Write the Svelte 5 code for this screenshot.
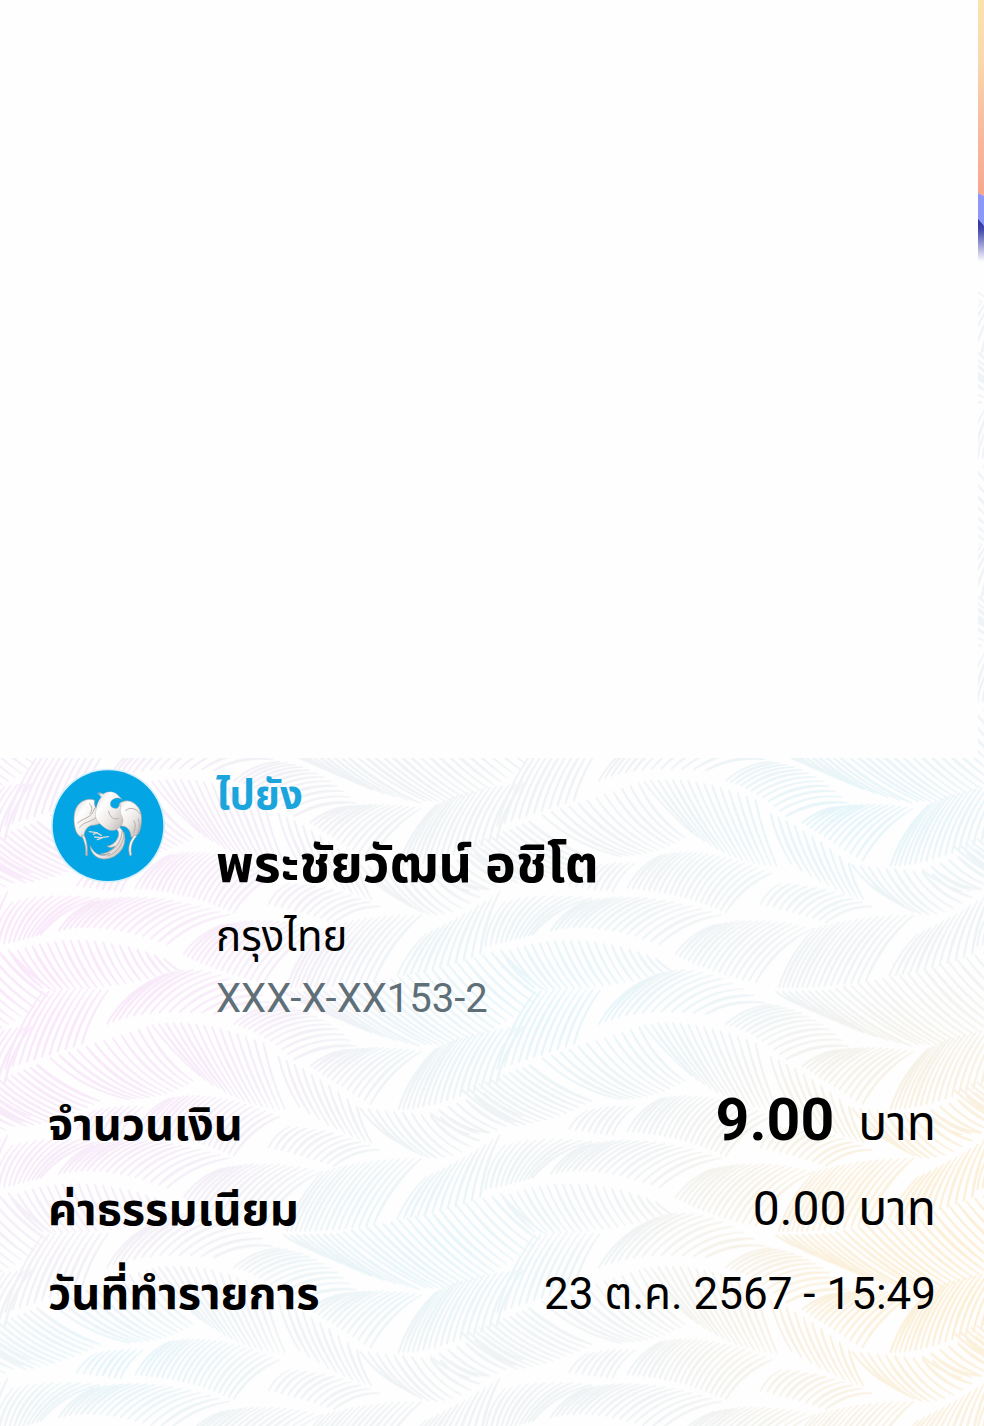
<script>
  // Feather bundles of the repeating watermark tile (1476 x 730 units).
  // root: quadratic along which hairs start, tip: quadratic along which they end,
  // n: number of hairs, bend: sideways bow of each hair.
  const feathers = [
    { root: [15, 935, 120, 900, 245, 860], tip: [130, 700, 220, 690, 325, 695], n: 11, bend: 0.07 },
    { root: [320, 800, 420, 750, 640, 768], tip: [480, 655, 620, 590, 820, 735], n: 13, bend: 0.12 },
    { root: [150, 170, 300, 120, 440, 75], tip: [390, 295, 500, 290, 580, 240], n: 12, bend: -0.1 },
    { root: [455, 70, 600, 45, 790, 125], tip: [600, 225, 740, 325, 855, 325], n: 15, bend: -0.04 },
    { root: [835, 165, 940, 210, 1070, 315], tip: [900, 320, 1040, 410, 1115, 425], n: 10, bend: -0.06 },
    { root: [1080, 320, 1200, 330, 1350, 350], tip: [1230, 440, 1320, 520, 1470, 395], n: 11, bend: -0.1 },
    { root: [1290, 335, 1370, 305, 1450, 275], tip: [1410, 400, 1500, 400, 1570, 345], n: 7, bend: -0.08 },
    { root: [700, 800, 780, 815, 880, 905], tip: [840, 740, 970, 760, 1070, 865], n: 12, bend: 0.12 },
    { root: [930, 195, 1000, 240, 1110, 310], tip: [1040, 145, 1150, 130, 1265, 150], n: 13, bend: 0.1 },
    { root: [1195, 325, 1300, 325, 1490, 245], tip: [1310, 140, 1400, 90, 1570, 75], n: 17, bend: 0.09 },
    { root: [1030, 690, 1250, 650, 1500, 575], tip: [1280, 860, 1450, 870, 1640, 700], n: 20, bend: -0.06 },
    { root: [850, 700, 930, 700, 1010, 695], tip: [970, 755, 1120, 840, 1260, 865], n: 9, bend: -0.07 },
    { root: [860, 690, 950, 695, 1120, 672], tip: [970, 510, 1100, 470, 1265, 470], n: 16, bend: 0.09 },
    { root: [1190, 655, 1300, 645, 1440, 590], tip: [1280, 525, 1380, 480, 1500, 400], n: 12, bend: 0.07 },
    { root: [-20, 565, 60, 550, 120, 530], tip: [40, 430, 150, 400, 300, 420], n: 11, bend: 0.12 },
    { root: [175, 520, 300, 485, 500, 560], tip: [280, 430, 450, 390, 690, 470], n: 17, bend: 0.11 },
    { root: [550, 590, 640, 640, 790, 675], tip: [670, 500, 800, 470, 965, 510], n: 16, bend: 0.12 },
    { root: [10, 595, 220, 495, 490, 600], tip: [110, 690, 300, 710, 540, 640], n: 21, bend: -0.06 },
    { root: [405, 392, 560, 400, 700, 465], tip: [510, 290, 640, 260, 840, 345], n: 20, bend: 0.12 },
    { root: [230, 385, 300, 395, 360, 402], tip: [290, 325, 360, 310, 430, 315], n: 8, bend: 0.1 },
    { root: [805, 440, 900, 460, 1000, 495], tip: [870, 375, 1000, 380, 1140, 445], n: 11, bend: 0.13 },
    { root: [-90, 265, 0, 235, 110, 190], tip: [80, 375, 200, 355, 300, 300], n: 12, bend: -0.07 }
  ];

  const at = (c, t) => {
    const u = 1 - t;
    return [
      u * u * c[0] + 2 * u * t * c[2] + t * t * c[4],
      u * u * c[1] + 2 * u * t * c[3] + t * t * c[5]
    ];
  };

  function hair(f, i) {
    const t = i / (f.n - 1);
    const [x1, y1] = at(f.root, t);
    const [x2, y2] = at(f.tip, t);
    const dx = x2 - x1;
    const dy = y2 - y1;
    const len = Math.hypot(dx, dy);
    const nx = dy / len;
    const ny = -dx / len;
    const thick = 4 + ((i * 5) % 7) / 2;
    const bow = f.bend * len * 1.4;
    const p = (x, y, k) => `${Math.round(x + nx * k)} ${Math.round(y + ny * k)}`;
    const mx = (x1 + x2) / 2;
    const my = (y1 + y2) / 2;
    return `M${p(x1, y1, 3)}Q${p(mx, my, bow + thick)} ${p(x2, y2, 2)}L${p(x2, y2, -2)}Q${p(mx, my, bow - thick)} ${p(x1, y1, -3)}Z`;
  }

  const tilePath = feathers
    .map((f) => Array.from({ length: f.n }, (_, i) => hair(f, i)).join(''))
    .join('');

  const shifts = [[0, 0], [0, -730], [0, 730], [-1476, 0], [-1476, -730], [1476, 0]];

  const payee = {
    label: 'ไปยัง',
    name: 'พระชัยวัฒน์ อชิโต',
    bank: 'กรุงไทย',
    account: 'XXX-X-XX153-2'
  };
</script>

<div class="slip">
  <svg class="watermark" aria-hidden="true">
    <defs>
      <pattern id="tile" width="1476" height="730" patternUnits="userSpaceOnUse" patternTransform="translate(0 28) scale(0.33333)">
        {#each shifts as [x, y]}
          <path d={tilePath} transform="translate({x} {y})" fill="#fff" />
        {/each}
      </pattern>
      <mask id="feathers">
        <rect width="100%" height="100%" fill="url(#tile)" />
      </mask>
      <radialGradient id="pink"><stop offset="0" stop-color="#f9e2fa" /><stop offset="0.5" stop-color="#f8e6fa" stop-opacity="0.8" /><stop offset="1" stop-color="#f6e6f8" stop-opacity="0" /></radialGradient>
      <radialGradient id="cyan"><stop offset="0" stop-color="#dff4fa" /><stop offset="1" stop-color="#e4f5fa" stop-opacity="0" /></radialGradient>
      <radialGradient id="gold"><stop offset="0" stop-color="#fdebc9" /><stop offset="0.5" stop-color="#fceed3" stop-opacity="0.85" /><stop offset="1" stop-color="#f9f0de" stop-opacity="0" /></radialGradient>
    </defs>
    <g mask="url(#feathers)" opacity="0.8">
      <rect width="100%" height="100%" fill="#edf1f3" />
      <ellipse cx="5%" cy="68%" rx="360" ry="370" fill="url(#pink)" />
      <ellipse cx="87%" cy="57%" rx="240" ry="110" fill="url(#cyan)" />
      <ellipse cx="55%" cy="70%" rx="260" ry="120" fill="url(#cyan)" />
      <ellipse cx="44%" cy="87%" rx="200" ry="120" fill="url(#cyan)" />
      <ellipse cx="12%" cy="95%" rx="180" ry="80" fill="url(#cyan)" />
      <ellipse cx="102%" cy="88%" rx="390" ry="310" fill="url(#gold)" />
    </g>
  </svg>

  <header class="top">
    <div class="blank"></div>
    <svg class="banner" viewBox="0 0 6 292" preserveAspectRatio="none" aria-hidden="true">
      <defs>
        <linearGradient id="dawn" x2="0" y2="1"><stop offset="0" stop-color="#fae3ad" /><stop offset="0.3" stop-color="#f8d9ae" /><stop offset="0.6" stop-color="#f8bfa2" /><stop offset="1" stop-color="#f9a58e" /></linearGradient>
        <linearGradient id="night" x2="0" y2="1"><stop offset="0" stop-color="#2b2f9c" /><stop offset="0.25" stop-color="#4448ae" /><stop offset="1" stop-color="#fff" /></linearGradient>
      </defs>
      <rect width="6" height="292" fill="#fefefe" />
      <path d="M0 0H6V196L0 193Z" fill="url(#dawn)" />
      <path d="M0 193L6 196V227L0 221Z" fill="#8d97f7" />
      <path d="M0 219L6 226V262H0Z" fill="url(#night)" />
    </svg>
  </header>

  <main>
    <section class="payee">
      <svg class="logo" viewBox="30 30 348 348" role="img" aria-label="กรุงไทย">
        <defs>
          <linearGradient id="silver" x2="1" y2="1"><stop offset="0" stop-color="#cfcdcb" /><stop offset="0.3" stop-color="#fff" /><stop offset="0.6" stop-color="#eeeae8" /><stop offset="1" stop-color="#bab5b2" /></linearGradient>
        </defs>
        <circle cx="204" cy="203" r="171" fill="#d5f0fb" />
        <circle cx="204" cy="203" r="166" fill="#03a5e5" />
        <g fill="url(#silver)" stroke="#a9a19d" stroke-width="2" stroke-linejoin="round">
          <path d="M164 127C143 118 119 129 108 151C99 171 101 199 108 220C115 235 124 239 132 237C132 220 139 208 155 202C167 202 178 200 186 190L180 160C166 155 162 142 164 127Z" />
          <path d="M238 137C259 119 286 132 298 153C308 173 305 201 299 219C292 235 282 239 273 236C272 216 261 205 245 204C228 200 215 185 218 165C230 158 240 150 238 137Z" />
          <path d="M124 231C134 249 139 269 137 292L142 293C144 267 140 247 132 232Z" />
          <path d="M284 231C268 249 262 272 270 294L275 291C270 270 276 249 290 235Z" />
          <path d="M236 205C256 222 260 246 248 270C235 292 212 304 190 303C168 301 151 284 151 263C163 292 190 299 210 285C201 290 190 292 181 288C202 286 218 277 225 265C216 270 208 269 201 265C218 262 231 249 235 234C238 222 232 214 224 210Z" />
          <path d="M172 104L183 109L177 103L190 108C202 98 224 98 234 112L247 125C235 116 220 119 213 130C207 144 216 153 232 151L242 139C241 154 239 163 246 176C255 192 244 208 226 216C209 223 191 208 177 195C162 181 166 159 170 145C173 132 179 123 184 117Z" stroke-width="1" />
        </g>
        <g fill="none" stroke="#b7afab" stroke-width="3" stroke-linecap="round">
          <path d="M113 195C129 179 155 182 164 151" /><path d="M119 208C131 191 151 193 167 180" /><path d="M148 137C158 145 158 157 150 167" />
          <path d="M257 157C273 146 288 151 300 167" /><path d="M281 224C287 209 288 197 281 188" /><path d="M293 225C300 208 299 193 295 183" />
          <path d="M206 160C211 180 221 186 235 181" /><path d="M247 219C244 251 230 270 207 280" /><path d="M252 224C253 255 231 286 203 294" />
        </g>
        <g fill="none" stroke="#dedcda" stroke-width="4" stroke-linecap="round">
          <path d="M148 221L169 224L184 232M160 229L172 224" /><path d="M164 237L183 239L205 236M172 245L190 238" />
        </g>
      </svg>
      <div class="details">
        <span class="label">{payee.label}</span>
        <h1>{payee.name}</h1>
        <span class="bank">{payee.bank}</span>
        <span class="account">{payee.account}</span>
      </div>
    </section>

    <dl>
      <div class="row"><dt>จำนวนเงิน</dt><dd><strong>9.00</strong>บาท</dd></div>
      <div class="row"><dt>ค่าธรรมเนียม</dt><dd>0.00 บาท</dd></div>
      <div class="row"><dt>วันที่ทำรายการ</dt><dd class="date">23 ต.ค. 2567 - 15:49</dd></div>
    </dl>
  </main>
</div>

<style>
  :global(body) {
    margin: 0;
    background: #fefefe;
  }

  .slip {
    position: relative;
    min-height: 100vh;
    color: #000;
    font-family: Roboto, 'Noto Sans Thai', 'Noto Sans', sans-serif;
  }

  .watermark {
    position: absolute;
    inset: 0;
    width: 100%;
    height: 100%;
  }

  .top {
    position: relative;
    display: flex;
    align-items: flex-start;
    min-height: 758px;
  }

  .blank {
    flex: 1;
    align-self: stretch;
    background: #fefefe;
  }

  .banner {
    width: 6px;
    height: 292px;
  }

  main {
    position: relative;
    padding: 10px 48px 98px;
  }

  .payee {
    display: flex;
    align-items: flex-start;
    gap: 50px;
    padding-left: 2px;
  }

  .logo {
    width: 116px;
    height: 116px;
    flex: none;
  }

  .details {
    display: flex;
    flex-direction: column;
    white-space: nowrap;
  }

  .label {
    color: #1ba5dc;
    font-size: 40px;
    font-weight: 700;
    line-height: 56px;
  }

  h1 {
    margin: 0;
    font-size: 52px;
    font-weight: 700;
    line-height: 82px;
  }

  .bank {
    font-size: 42px;
    line-height: 62px;
  }

  .account {
    color: #5f6f78;
    font-size: 40px;
    line-height: 62px;
  }

  dl {
    margin: 48px 0 0;
  }

  .row {
    display: flex;
    justify-content: space-between;
    align-items: baseline;
    line-height: 84px;
    white-space: nowrap;
    font-size: 48px;
  }

  dt {
    font-size: 45px;
    font-weight: 700;
  }

  dd {
    margin: 0;
  }

  strong {
    margin-right: 24px;
    font-size: 59px;
  }

  .date {
    font-size: 44px;
  }
</style>
